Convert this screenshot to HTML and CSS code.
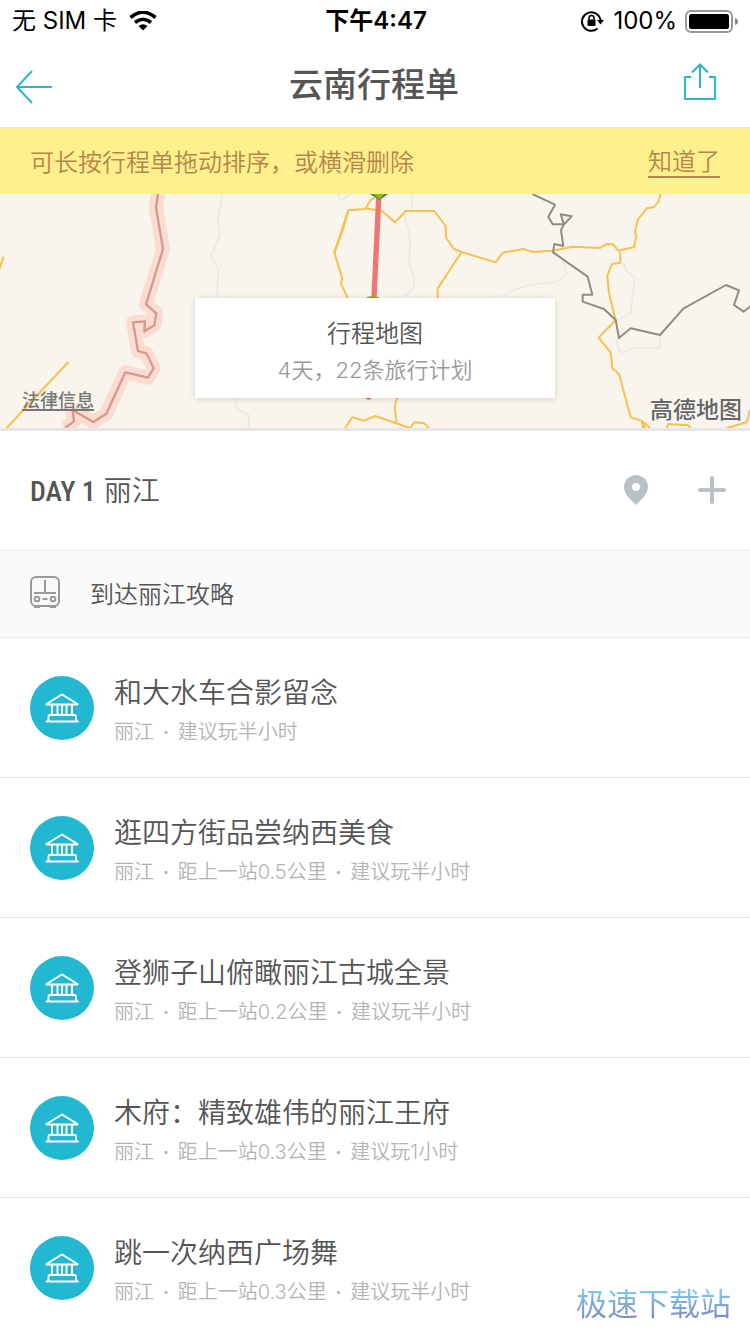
FILE: index.html
```html
<!DOCTYPE html>
<html lang="zh-CN">

<head>
  <meta charset="UTF-8" />
  <meta name="viewport" content="width=device-width, initial-scale=1.0" />
  <title>云南行程单</title>
  <link rel="stylesheet" href="styles.css">
</head>

<body>
  <!-- shared icon for the sight rows -->
  <svg class="sprite" aria-hidden="true">
    <symbol id="sight" viewBox="0 0 64 64">
      <path d="M16.500 28L32 18.500L47.500 28V28.500H16.500ZM22 29.500V38.500M27.500 29.500V38.500M36.500 29.500V38.500M42 29.500V38.500M32 29.500V38.500M18.500 45.500V40.500Q18.500 39 20 39H44.500Q46 39 46 40.500V45.500M16.500 45.500H48" />
    </symbol>
  </svg>

  <div class="page">
    <div class="status">
      <div class="status-left">
        <span>无 SIM 卡</span>
        <svg width="28" height="20" viewBox="0 0 28 20">
          <path d="M1.500 6.500Q14 -4 26.500 6.500M6 11.500Q14 5 22 11.500" fill="none" stroke="#000" stroke-width="3.600" />
          <path d="M9.500 15Q14 11.500 18.500 15L14 19.500Z" />
        </svg>
      </div>
      <div class="status-time">下午4:47</div>
      <div class="status-right">
        <svg width="24" height="22" viewBox="0 0 24 22">
          <path d="M16.500 18.500A9.300 9.300 0 1 1 19.600 11" fill="none" stroke="#000" stroke-width="2" />
          <path d="M16 10H23L19.500 14.500Z" />
          <rect x="6.500" y="9.500" width="8" height="6.500" rx="1" />
          <path d="M8 10V8Q8 5.500 10.500 5.500Q13 5.500 13 8V10" fill="none" stroke="#000" stroke-width="1.500" />
        </svg>
        <span>100%</span>
        <svg width="53" height="23" viewBox="0 0 53 23">
          <rect x="1" y="1" width="46" height="21" rx="5" fill="none" stroke="#999" stroke-width="2" />
          <rect x="4" y="4" width="40" height="15" rx="2.500" />
          <path d="M50 8Q53 9 53 11.500Q53 14 50 15Z" fill="#888" />
        </svg>
      </div>
    </div>

    <header class="navbar">
      <button class="icon-btn" aria-label="返回">
        <svg width="38" height="40" viewBox="0 0 38 40">
          <path d="M17 7L2 23L17 39M2 23H37" />
        </svg>
      </button>
      <h1>云南行程单</h1>
      <button class="icon-btn" aria-label="分享">
        <svg width="34" height="42" viewBox="0 0 34 42">
          <path d="M8 14H2V36H32V14H26M17 25V2M9 9.500L17 1.500L25 9.500" />
        </svg>
      </button>
    </header>

    <div class="tip">
      <p>可长按行程单拖动排序，或横滑删除</p>
      <button>知道了</button>
    </div>

    <section class="map">
      <svg class="map-bg" viewBox="0 222 2250 702" preserveAspectRatio="xMidYMid slice" aria-hidden="true">
        <g class="river">
          <path d="M668 222L652 305L661 342L632 410L655 445L651 534M706 834L712 868L746 885V924M1015 222L1022 242L1050 222" />
          <path d="M1237 222V272M1212 282L1230 350L1228 430L1243 475L1240 505L1210 532M1505 530Q1550 500 1610 492L1670 485L1700 462L1690 420M1870 430L1880 455L1905 472L1892 580L1850 600M1850 655L1855 690L1870 698L1900 684L1980 683V645" />
        </g>
        <path class="border-glow" d="M474 222L468 262L489 387L438 553L469 580L463 616L433 634L435 604L399 607L414 693L439 700L461 744L444 773L376 757L319 881L280 906L218 870L222 904L195 924" />
        <path class="border-line" d="M474 222L468 262L489 387L438 553L469 580L463 616L433 634L435 604L399 607L414 693L439 700L461 744L444 773L376 757L319 881L280 906L218 870L222 904L195 924" />
        <g class="road">
          <path d="M-5 455L11 410M205 726L20 924M1125 232L1112 240L1097 265L1125 270M1097 267L1045 271L1003 398L1027 475L1022 490L1044 534" />
          <path d="M1045 271L1030 325L1003 398" />
          <path d="M1125 266L1145 272L1185 307L1217 273H1303L1337 318L1338 353L1362 387L1385 396L1487 427L1508 398L1570 387L1600 396L1658 392L1718 380L1800 384L1818 373L1838 372L1855 392L1902 381L1909 350L1905 335L1913 300L1940 265L1960 262L1976 245L1982 222" />
          <path d="M1385 396L1313 505V534M1860 395L1861 428L1836 432L1822 467L1827 520L1847 600L1796 653L1832 698L1837 745L1857 762L1892 892L1925 902L1935 924M1930 924L1925 902L1950 924" />
          <path d="M1035 924L1057 892L1092 902L1125 888L1230 924L1243 907L1272 910L1287 924M1191 834L1184 860L1190 912M2000 924L2005 912L2065 916L2072 924M2180 924L2240 907L2250 870" />
        </g>
        <path class="province" d="M1597 222L1665 254L1645 290L1658 313H1692L1715 289L1682 283L1692 313L1683 330L1690 378L1663 372L1659 397L1763 470L1777 524H1748V545L1812 567L1847 600L1857 654L1892 625L1980 645L2050 566L2178 495L2217 511L2202 555L2231 575L2252 558" />
        <path class="route" d="M1136 235L1122 534" />
        <path d="M1110 222H1164L1138 240Z" fill="#567" />
        <path d="M1118 222H1154L1138 238Z" fill="#8bbd00" />
        <ellipse cx="1119" cy="540" rx="26" ry="12" fill="#8bb51e" />
        <ellipse cx="1106" cy="832" rx="9" ry="7" fill="#e57373" />
      </svg>
      <a class="legal" href="#">法律信息</a>
      <span class="amap">高德地图</span>
      <a class="map-card" href="#">
        <strong>行程地图</strong>
        <span>4天，22条旅行计划</span>
      </a>
    </section>

    <section class="day">
      <h2><b>DAY 1</b> 丽江</h2>
      <div class="day-actions">
        <button aria-label="地图">
          <svg width="24" height="30" viewBox="0 0 24 30">
            <path fill-rule="evenodd" d="M12 0A12 12 0 0 0 0 12C0 19 7 25 12 30C17 25 24 19 24 12A12 12 0 0 0 12 0ZM12 8A4 4 0 1 1 12 16A4 4 0 1 1 12 8Z" />
          </svg>
        </button>
        <button aria-label="添加">
          <svg width="28" height="28" viewBox="0 0 28 28">
            <path d="M14 2V26M2 14H26" stroke="#b8c2c4" stroke-width="4" stroke-linecap="round" />
          </svg>
        </button>
      </div>
    </section>

    <a class="guide" href="#">
      <svg width="30" height="32" viewBox="0 0 30 32">
        <rect x="1" y="1" width="28" height="29" rx="5" />
        <path d="M15 4V17M4 17H26M12.500 23H17.500M4 31H10M20 31H26" />
        <circle cx="7" cy="23" r="2.300" />
        <circle cx="23" cy="23" r="2.300" />
      </svg>
      <span>到达丽江攻略</span>
    </a>

    <ul class="plans">
      <li class="plan">
        <svg class="plan-icon"><use href="#sight" /></svg>
        <div class="plan-text">
          <h3>和大水车合影留念</h3>
          <p>丽江 <i>·</i> 建议玩半小时</p>
        </div>
      </li>
      <li class="plan">
        <svg class="plan-icon"><use href="#sight" /></svg>
        <div class="plan-text">
          <h3>逛四方街品尝纳西美食</h3>
          <p>丽江 <i>·</i> 距上一站0.5公里 <i>·</i> 建议玩半小时</p>
        </div>
      </li>
      <li class="plan">
        <svg class="plan-icon"><use href="#sight" /></svg>
        <div class="plan-text">
          <h3>登狮子山俯瞰丽江古城全景</h3>
          <p>丽江 <i>·</i> 距上一站0.2公里 <i>·</i> 建议玩半小时</p>
        </div>
      </li>
      <li class="plan">
        <svg class="plan-icon"><use href="#sight" /></svg>
        <div class="plan-text">
          <h3>木府：精致雄伟的丽江王府</h3>
          <p>丽江 <i>·</i> 距上一站0.3公里 <i>·</i> 建议玩1小时</p>
        </div>
      </li>
      <li class="plan">
        <svg class="plan-icon"><use href="#sight" /></svg>
        <div class="plan-text">
          <h3>跳一次纳西广场舞</h3>
          <p>丽江 <i>·</i> 距上一站0.3公里 <i>·</i> 建议玩半小时</p>
        </div>
      </li>
    </ul>

    <div class="watermark">极速下载站</div>
  </div>
</body>

</html>
```
FILE: styles.css
```css
* {
  margin: 0;
  padding: 0;
  box-sizing: border-box;
}

body {
  font-family: Inter, "Noto Sans CJK SC", sans-serif;
  color: #555;
  background: #fff;
}

button {
  border: 0;
  background: none;
  font: inherit;
  color: inherit;
  cursor: pointer;
}

a {
  color: inherit;
  text-decoration: none;
}

svg {
  display: block;
  flex: none;
}

.sprite {
  position: absolute;
  width: 0;
  height: 0;
}

.page {
  position: relative;
  height: 100vh;
  overflow: hidden;
}

/* status bar */
.status {
  display: grid;
  grid-template-columns: 1fr auto 1fr;
  align-items: center;
  padding: 0 12px;
  height: 40px;
  font-size: 24px;
  line-height: 42px;
  color: #000;
}

.status-left,
.status-right {
  display: flex;
  align-items: center;
  gap: 12px;
}

.status-right {
  justify-content: flex-end;
  gap: 8px;
}

.status-time {
  padding-left: 2px;
  font-weight: 600;
}

.navbar {
  display: grid;
  grid-template-columns: 1fr auto 1fr;
  align-items: center;
  height: 88px;
  padding: 0 33px 0 15px;
  border-bottom: 1px solid #e8e8e8;
}

.navbar h1 {
  padding: 2px 0 0 16px;
  font-size: 34px;
  font-weight: 500;
  line-height: 48px;
}

.icon-btn {
  justify-self: start;
}

.icon-btn:last-child {
  justify-self: end;
}

.icon-btn svg {
  fill: none;
  stroke: #2bb5c7;
  stroke-width: 2;
}

.tip {
  display: flex;
  align-items: center;
  justify-content: space-between;
  padding: 18px 30px 14px;
  background: #fff08e;
  color: #b5854a;
  font-size: 24px;
  font-weight: 350;
  line-height: 34px;
}

.tip button {
  line-height: 28px;
  border-bottom: 2px solid #b5854a;
}

/* map */
.map {
  position: relative;
  display: flex;
  align-items: flex-end;
  justify-content: center;
  height: 237px;
  padding-bottom: 30px;
  border-bottom: 3px solid #e6e6e8;
  background: #f9f5ed;
}

.map-bg {
  position: absolute;
  inset: 0;
  width: 100%;
  height: 100%;
  fill: none;
  stroke-linejoin: round;
}

.river {
  stroke: #e6ebe8;
  stroke-width: 5;
}

.border-glow {
  stroke: #fbdcd3;
  stroke-width: 42;
}

.border-line {
  stroke: #d49a90;
  stroke-width: 7;
}

.road {
  stroke: #f8c04c;
  stroke-width: 6;
}

.province {
  stroke: #8e8c89;
  stroke-width: 6;
}

.route {
  stroke: #f07575;
  stroke-width: 16;
}

.legal {
  position: absolute;
  left: 22px;
  bottom: 17px;
  font-size: 18px;
  font-weight: 500;
  line-height: 16px;
  color: #777;
  border-bottom: 2px solid #777;
}

.amap {
  position: absolute;
  right: 8px;
  bottom: 2px;
  font-size: 23px;
  font-weight: 500;
  line-height: 32px;
  color: #666;
  text-shadow: 0 0 2px #fff;
}

.map-card {
  position: relative;
  width: 48%;
  padding: 17px 0 9px;
  background: #fff;
  box-shadow: 0 1px 6px rgba(0, 0, 0, 0.15);
  text-align: center;
}

.map-card strong,
.map-card span {
  display: block;
  font-size: 24px;
  font-weight: 350;
  line-height: 37px;
}

.map-card span {
  font-size: 22px;
  color: #999;
}

.day {
  display: flex;
  align-items: center;
  justify-content: space-between;
  height: 120px;
  padding: 0 24px 2px 30px;
  border-bottom: 1px solid #e8e8e8;
}

.day h2 {
  padding-top: 4px;
  font-size: 28px;
  font-weight: 350;
  line-height: 40px;
}

.day h2 b {
  font-family: "Roboto Condensed", "Noto Sans CJK SC", sans-serif;
  font-size: 28px;
  font-weight: 500;
}

.day-actions {
  display: flex;
  align-items: center;
  gap: 50px;
}

.day-actions svg {
  fill: #b8c2c4;
}

.guide {
  display: flex;
  align-items: center;
  gap: 30px;
  height: 87px;
  padding: 0 30px 4px;
  border-bottom: 1px solid #e8e8e8;
  background: #fafafa;
  font-size: 24px;
  font-weight: 350;
}

.guide svg {
  fill: none;
  stroke: #999;
  stroke-width: 2;
}

/* plan list */
.plans {
  list-style: none;
}

.plan {
  display: flex;
  align-items: center;
  gap: 20px;
  height: 140px;
  padding: 0 30px;
  border-bottom: 1px solid #e8e8e8;
}

.plan-icon {
  width: 64px;
  height: 64px;
  border-radius: 50%;
  background: #22b8d1;
  fill: none;
  stroke: #fff;
  stroke-width: 2;
  stroke-linejoin: round;
  stroke-linecap: round;
}

.plan-text {
  padding-top: 6px;
}

.plan h3 {
  font-size: 28px;
  font-weight: 350;
  line-height: 42px;
}

.plan p {
  font-size: 20px;
  font-weight: 350;
  line-height: 36px;
  color: #b4b4b4;
}

.plan i {
  margin: 0 3px;
  font-style: normal;
  font-weight: 600;
}

.watermark {
  position: absolute;
  right: 19px;
  bottom: 8px;
  font-size: 31px;
  line-height: 44px;
  background: linear-gradient(#7cc8ee 20%, #7f8fc4 80%);
  -webkit-background-clip: text;
  background-clip: text;
  color: transparent;
}
```
